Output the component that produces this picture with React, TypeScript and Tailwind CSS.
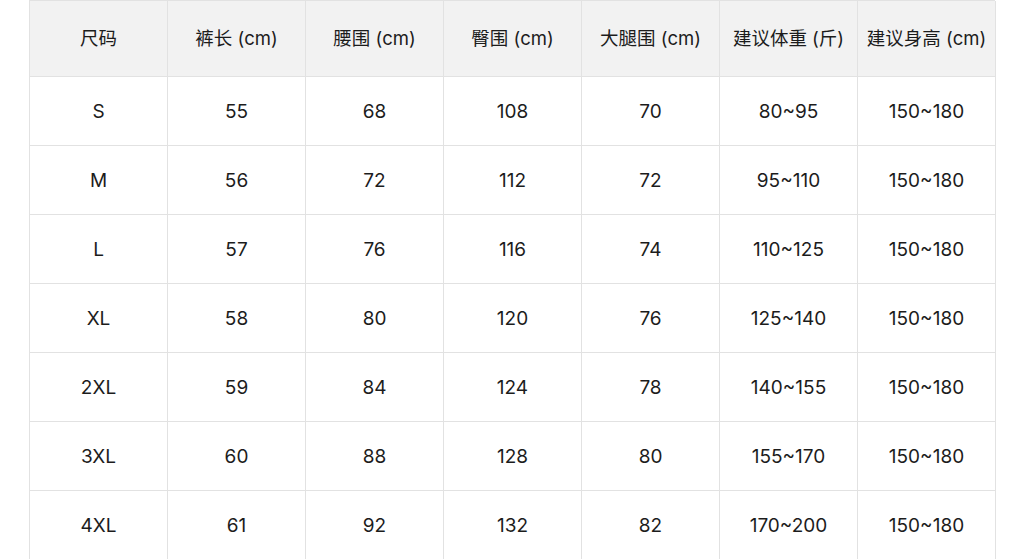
import React from "react";

const headers = ["尺码", "裤长 (cm)", "腰围 (cm)", "臀围 (cm)", "大腿围 (cm)", "建议体重 (斤)", "建议身高 (cm)"];
const rows = [
  ["S", "55", "68", "108", "70", "80~95", "150~180"],
  ["M", "56", "72", "112", "72", "95~110", "150~180"],
  ["L", "57", "76", "116", "74", "110~125", "150~180"],
  ["XL", "58", "80", "120", "76", "125~140", "150~180"],
  ["2XL", "59", "84", "124", "78", "140~155", "150~180"],
  ["3XL", "60", "88", "128", "80", "155~170", "150~180"],
  ["4XL", "61", "92", "132", "82", "170~200", "150~180"],
];

export default function App() {
  return (
    <div
      className="w-[1024px] h-[559px] bg-white overflow-hidden"
      style={{ fontFamily: 'Inter, "Noto Sans CJK SC", sans-serif' }}
    >
      <div className="ml-[29px] w-[966px] grid grid-cols-[repeat(7,138px)] border-l border-t border-[#e2e2e2] text-[#1c1c1c]">
        {headers.map((h) => (
          <div
            key={h}
            className="h-[76px] flex items-center justify-center bg-[#f2f2f2] border-r border-b border-[#e2e2e2] whitespace-nowrap text-[18.5px]"
          >
            {h}
          </div>
        ))}
        {rows.map((r, i) =>
          r.map((c, j) => (
            <div
              key={i + "-" + j}
              className="h-[69px] flex items-center justify-center pt-[3px] border-r border-b border-[#e2e2e2] text-[19px]"
            >
              {c}
            </div>
          ))
        )}
      </div>
    </div>
  );
}
